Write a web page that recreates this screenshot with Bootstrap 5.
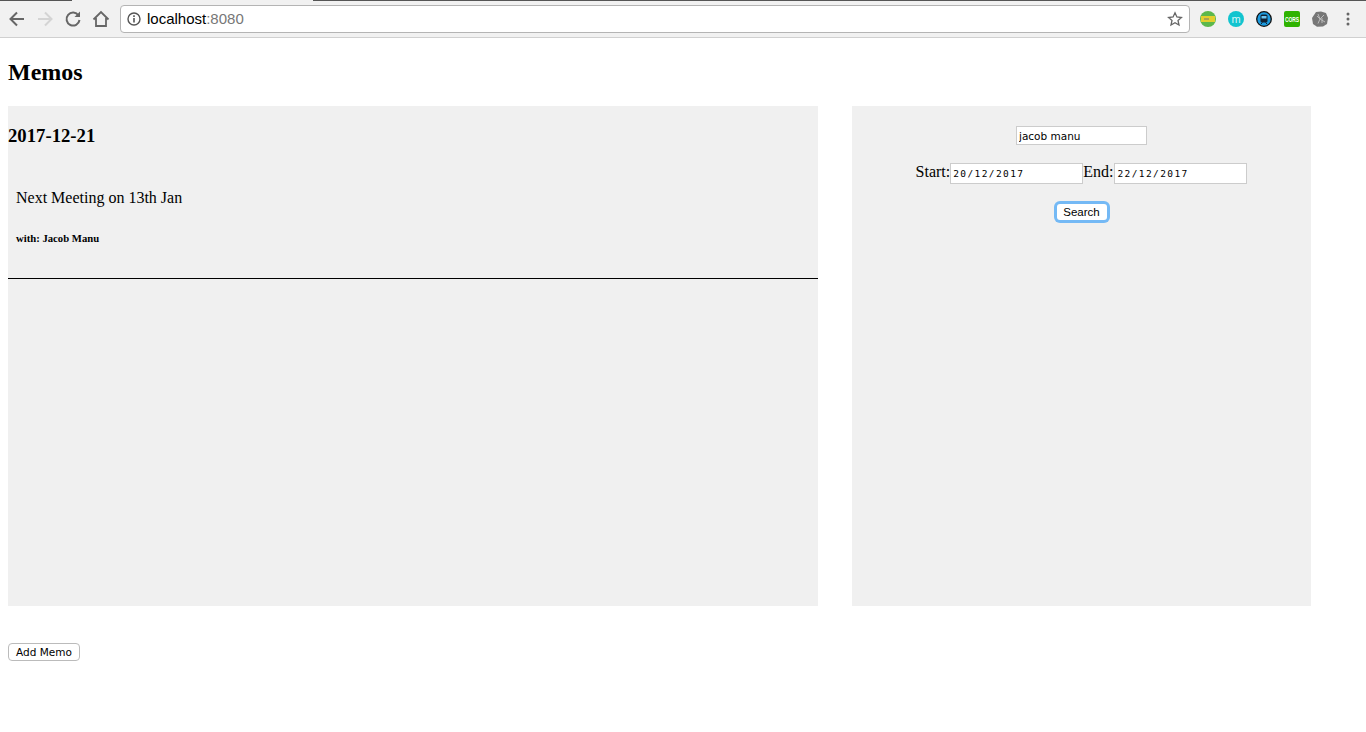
<!DOCTYPE html>
<html lang="en">
<head>
  <meta charset="UTF-8">
  <meta name="viewport" content="width=device-width, initial-scale=1">
  <title>Memos</title>
  <link href="https://cdn.jsdelivr.net/npm/bootstrap@5.3.3/dist/css/bootstrap.min.css" rel="stylesheet">
  <script src="https://cdn.jsdelivr.net/npm/bootstrap@5.3.3/dist/js/bootstrap.bundle.min.js"></script>
  <style>
    body { font-family: "Liberation Serif", serif; font-size: 16px; color: #000; background: #fff; }
    /* browser toolbar */
    .chrome-bar { height: 38px; background: #f1f1f1; border-bottom: 1px solid #d0d0d0; position: relative; padding-left: 3px; }
    .tab-edge { position: absolute; top: 0; height: 1px; background: #555; }
    .tab-edge-a { left: 0; width: 72px; }
    .tab-edge-b { left: 313px; right: 0; }
    .tool-btn { width: 20px; height: 20px; flex: none; }
    .tool-gap { width: 28px; flex: none; display: flex; justify-content: center; }
    .omnibox { width: 1070px; height: 28px; margin-left: 5px; background: #fff; border: 1px solid #b4b4b4; border-radius: 4px; font-family: "Liberation Sans", sans-serif; font-size: 15px; padding: 0 6px; }
    .omnibox-host { color: #000; padding-top: 2px; }
    .omnibox-port { color: #777; padding-top: 2px; }
    .info-icon { margin-right: 6px; }
    .ext-wrap { margin-left: 4px; }
    .ext-icon { width: 28px; display: flex; justify-content: center; flex: none; }
    /* page */
    .page-wrap { padding: 0 8px; }
    .page-title { font-family: "Liberation Serif", serif; font-size: 24px; font-weight: 700; line-height: 28px; margin: 20px 0 20px; }
    .panel-row { height: 500px; }
    .memo-panel { width: 810px; background: #f0f0f0; margin-right: 34px; }
    .search-panel { width: 459px; background: #f0f0f0; padding-top: 20px; }
    .memo-date { font-family: "Liberation Serif", serif; font-size: 18.72px; font-weight: 700; line-height: 22px; margin: 19px 0 0; }
    .memo-item { padding: 42px 8px 0; border-bottom: 1px solid #000; height: 132px; }
    .memo-text { font-size: 16px; line-height: 18px; margin: 0; }
    .memo-with { font-family: "Liberation Serif", serif; font-size: 10.7px; font-weight: 700; line-height: 12px; margin: 25px 0 0; }
    .field-plain { border: 1px solid #ccc; background: #fff; color: #000; padding: 0 2px; outline: 0; border-radius: 0; }
    .name-field { width: 131px; height: 19px; font-family: "DejaVu Sans", sans-serif; font-size: 10.5px; display: block; }
    .date-row { height: 21px; margin-top: 18px; line-height: 18px; }
    .date-field { width: 133px; height: 21px; font-family: "DejaVu Sans Mono", monospace; font-size: 9.5px; letter-spacing: 1.4px; padding-left: 2px; }
    .end-label { padding-right: 1px; }
    .search-btn { font-family: "Liberation Sans", sans-serif; font-size: 11.5px; line-height: 13px; height: 16px; width: 50px; padding: 0; margin-top: 20px; background: #fff; color: #000; border: 0; border-radius: 3px; box-shadow: 0 0 0 3px #74b9f5; }
    .add-btn { font-family: "DejaVu Sans", sans-serif; font-size: 10.5px; line-height: 13px; height: 18px; width: 72px; padding: 0; margin-top: 37px; background: #fff; color: #000; border: 1px solid #bbb; border-radius: 4px; display: block; }
  </style>
</head>
<body>

  <div class="chrome-bar d-flex align-items-center">
    <div class="tab-edge tab-edge-a"></div>
    <div class="tab-edge tab-edge-b"></div>
    <div class="tool-gap">
      <svg class="tool-btn" viewBox="0 0 20 20" fill="none" stroke="#666" stroke-width="2"><path d="M17 10H4M10 3.500 3.500 10l6.500 6.500"/></svg>
    </div>
    <div class="tool-gap">
      <svg class="tool-btn" viewBox="0 0 20 20" fill="none" stroke="#d4d4d4" stroke-width="2"><path d="M3 10h13M10 3.500l6.500 6.500-6.500 6.500"/></svg>
    </div>
    <div class="tool-gap">
      <svg class="tool-btn" viewBox="0 0 20 20" fill="none" stroke="#666" stroke-width="2"><path d="M15.500 6.500A6.500 6.500 0 1 0 16.500 11"/><path d="M17 2.500V8h-5.500z" fill="#666" stroke="none"/></svg>
    </div>
    <div class="tool-gap">
      <svg class="tool-btn" viewBox="0 0 20 20" fill="none" stroke="#666" stroke-width="1.800"><path d="M2.500 10.500 10 3l7.500 7.500M5 9v8h10V9"/></svg>
    </div>
    <div class="omnibox d-flex align-items-center">
      <svg width="14" height="14" viewBox="0 0 14 14" class="info-icon"><circle cx="7" cy="7" r="6" fill="none" stroke="#555" stroke-width="1.400"/><path d="M6.200 6h1.600v4.500H6.200zM6.200 3.300h1.600v1.600H6.200z" fill="#555"/></svg>
      <span class="omnibox-host">localhost</span><span class="omnibox-port">:8080</span>
      <svg width="16" height="16" viewBox="0 0 16 16" class="ms-auto"><path d="M8 1.800l1.900 4.200 4.500.5-3.400 3 1 4.500L8 11.700 4 14l1-4.500-3.400-3 4.500-.5z" fill="none" stroke="#666" stroke-width="1.300"/></svg>
    </div>
    <div class="ext-wrap d-flex align-items-center">
      <div class="ext-icon">
        <svg width="16" height="16" viewBox="0 0 16 16"><circle cx="8" cy="8" r="8" fill="#5cb84c"/><rect x="1" y="5" width="14" height="6" fill="#e2cf2e"/><path d="M4 8h5" stroke="#777" stroke-width="1"/></svg>
      </div>
      <div class="ext-icon">
        <svg width="16" height="16" viewBox="0 0 16 16"><circle cx="8" cy="8" r="8" fill="#12c4cf"/><text x="8" y="11.500" text-anchor="middle" font-family="Liberation Sans, sans-serif" font-size="11" fill="#d8f6f8">m</text></svg>
      </div>
      <div class="ext-icon">
        <svg width="16" height="16" viewBox="0 0 16 16"><circle cx="8" cy="8" r="7.300" fill="#1b9be0" stroke="#111" stroke-width="1.300"/><rect x="4.500" y="3.500" width="7" height="8" rx="1.500" fill="#123"/><rect x="5.500" y="5" width="5" height="2.500" fill="#6cc4f0"/><path d="M5 13l1.500-1.500M11 13 9.500 11.500" stroke="#123"/></svg>
      </div>
      <div class="ext-icon">
        <svg width="16" height="16" viewBox="0 0 16 16"><rect width="16" height="16" rx="2" fill="#2fb300"/><text transform="translate(8 11) scale(.85 1.4)" text-anchor="middle" font-family="Liberation Sans, sans-serif" font-size="5.800" font-weight="700" fill="#fff">CORS</text></svg>
      </div>
      <div class="ext-icon">
        <svg width="16" height="16" viewBox="0 0 16 16"><path d="M4 1 9 .5 14 2l2 5-1 6-4 2.500-6 .2L1 13 0 7z" fill="#777"/><path d="M5 5l3 3 4-4M8 8l-2 4.500M8 8l5 3M6 3l2 5M10 7v5" stroke="#bbb" fill="none"/></svg>
      </div>
      <div class="ext-icon">
        <svg width="4" height="14" viewBox="0 0 4 14" fill="#666"><circle cx="2" cy="2" r="1.500"/><circle cx="2" cy="7" r="1.500"/><circle cx="2" cy="12" r="1.500"/></svg>
      </div>
    </div>
  </div>

  <div class="page-wrap">
    <h1 class="page-title">Memos</h1>

    <div class="panel-row d-flex">
      <div class="memo-panel">
        <h2 class="memo-date">2017-12-21</h2>
        <div class="memo-item">
          <p class="memo-text">Next Meeting on 13th Jan</p>
          <h6 class="memo-with">with: Jacob Manu</h6>
        </div>
      </div>

      <div class="search-panel d-flex flex-column align-items-center">
        <input class="field-plain name-field" type="text" value="jacob manu">
        <div class="date-row d-flex">
          <label for="start">Start:</label><input id="start" class="field-plain date-field" type="text" value="20/12/2017"><label for="end" class="end-label">End:</label><input id="end" class="field-plain date-field" type="text" value="22/12/2017">
        </div>
        <button class="search-btn" type="button">Search</button>
      </div>
    </div>

    <button class="add-btn" type="button">Add Memo</button>
  </div>

</body>
</html>
